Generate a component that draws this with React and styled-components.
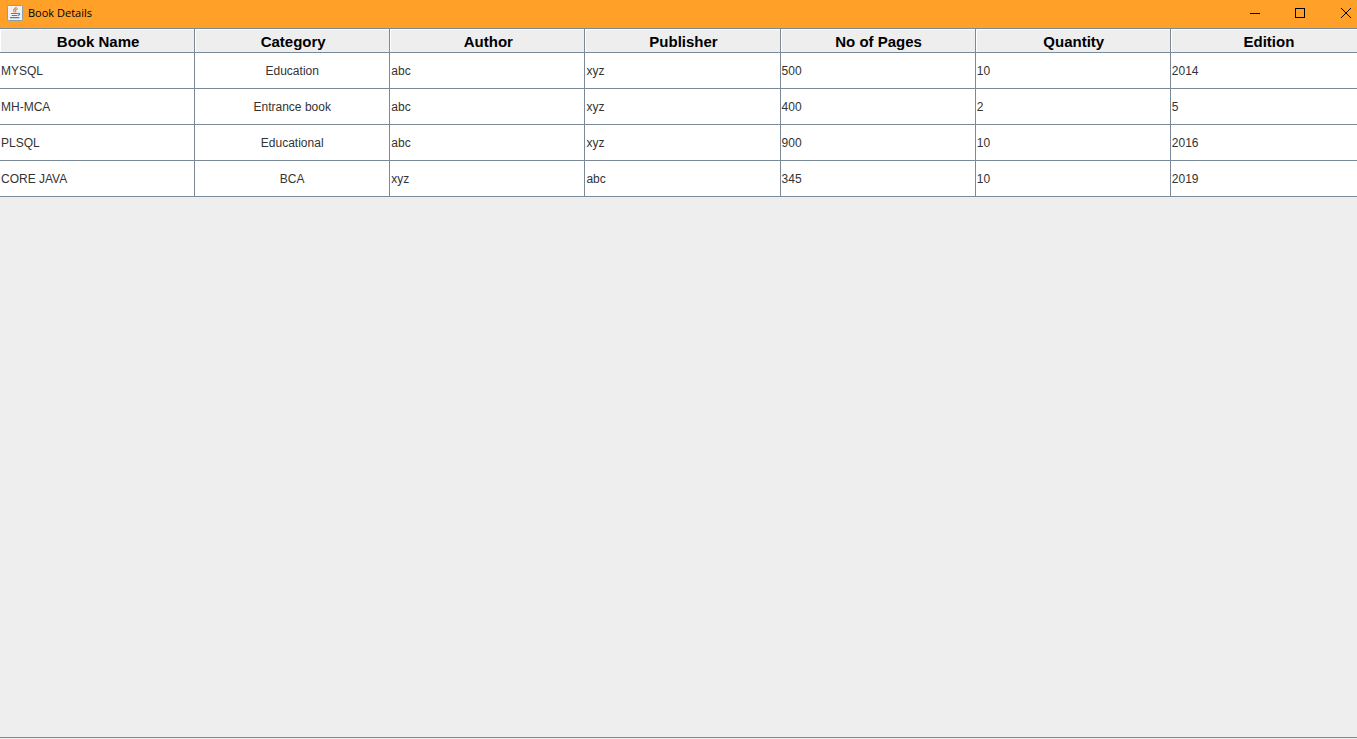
import React from "react";
import styled, { createGlobalStyle } from "styled-components";

const GlobalStyle = createGlobalStyle`
  * { box-sizing: border-box; }
  body { margin: 0; background: #eeeeee; }
`;

const Frame = styled.div`
  display: flex;
  flex-direction: column;
  min-height: 100vh;
  padding-bottom: 1px;
  background: #eeeeee;
  font-family: "Liberation Sans", Arial, sans-serif;
`;

const TitleBar = styled.header`
  display: flex;
  align-items: center;
  height: 28px;
  padding: 0 0 3px 7px;
  background: #ffa029;
  color: #000000;
`;

const Title = styled.h1`
  flex: 1;
  margin: 0 0 0 5px;
  font-family: "Open Sans", "Segoe UI", sans-serif;
  font-size: 11px;
  font-weight: 400;
  line-height: 16px;
`;

const WindowControls = styled.div`
  display: flex;
  flex: none;
  overflow: hidden;
  width: 125px;
`;

const ControlButton = styled.button`
  display: flex;
  flex: none;
  align-items: center;
  justify-content: center;
  width: ${({ $wide }) => ($wide ? 48 : 45)}px;
  height: 24px;
  padding: 0;
  border: 0;
  background: transparent;
  color: inherit;
`;

const ScrollPane = styled.main`
  flex: 1;
  overflow: hidden;
  border-top: 1px solid #7a8a99;
  border-bottom: 1px solid #7a8a99;
`;

const Table = styled.table`
  width: calc(100% + 9px);
  table-layout: fixed;
  border-collapse: separate;
  border-spacing: 0;
`;

const HeaderCell = styled.th`
  height: 24px;
  padding: 2px 0 0 2px;
  border-right: 1px solid #7a8a99;
  border-bottom: 1px solid #7a8a99;
  background: #eeeeee;
  box-shadow: inset 1px 1px 0 #ffffff;
  color: #000000;
  font-size: 15px;
  font-weight: 700;
  line-height: 20px;
  text-align: center;
`;

const Cell = styled.td`
  height: 36px;
  padding: 0 1px;
  border-right: 1px solid #7a8a99;
  border-bottom: 1px solid #7a8a99;
  background: #ffffff;
  color: #333333;
  font-size: 12px;
  line-height: 16px;
  text-align: ${({ $centered }) => ($centered ? "center" : "left")};
`;

const columns = ["Book Name", "Category", "Author", "Publisher", "No of Pages", "Quantity", "Edition"];

const books = [
  ["MYSQL", "Education", "abc", "xyz", "500", "10", "2014"],
  ["MH-MCA", "Entrance book", "abc", "xyz", "400", "2", "5"],
  ["PLSQL", "Educational", "abc", "xyz", "900", "10", "2016"],
  ["CORE JAVA", "BCA", "xyz", "abc", "345", "10", "2019"],
];

function JavaIcon() {
  return (
    <svg width="16" height="16" viewBox="0 0 16 16" fill="none" aria-hidden="true">
      <rect x="0.5" y="0.5" width="15" height="15" rx="1" fill="#eff2f4" stroke="#8b9fb0" />
      <path d="M9.2 1.8C9.2 3.4 6.3 4.2 6.5 5.8c.1.7.8 1 1 1.6M10.6 3.6C9 4.4 8.2 5 8.7 6c.3.5.1 1-.3 1.4" stroke="#ee8140" strokeWidth="1.2" />
      <path d="M4 8.5h7M4.8 10.5h5.4M11 8.3c2.4-.4 2 1.9-.2 2.2M3 12.6h9.4" stroke="#527fa6" strokeWidth="1.1" />
    </svg>
  );
}

function MinimizeIcon() {
  return (
    <svg width="10" height="10" viewBox="0 0 10 10" stroke="currentColor" aria-hidden="true">
      <path d="M0 5.5h10" />
    </svg>
  );
}

function MaximizeIcon() {
  return (
    <svg width="10" height="10" viewBox="0 0 10 10" fill="none" stroke="currentColor" aria-hidden="true">
      <rect x="0.5" y="0.5" width="9" height="9" />
    </svg>
  );
}

function CloseIcon() {
  return (
    <svg width="10" height="10" viewBox="0 0 10 10" stroke="currentColor" aria-hidden="true">
      <path d="M0 0l10 10M10 0L0 10" />
    </svg>
  );
}

export default function App() {
  return (
    <>
      <GlobalStyle />
      <Frame>
        <TitleBar>
          <JavaIcon />
          <Title>Book Details</Title>
          <WindowControls>
            <ControlButton type="button" aria-label="Minimize"><MinimizeIcon /></ControlButton>
            <ControlButton type="button" aria-label="Maximize"><MaximizeIcon /></ControlButton>
            <ControlButton type="button" aria-label="Close" $wide><CloseIcon /></ControlButton>
          </WindowControls>
        </TitleBar>
        <ScrollPane>
          <Table>
            <thead>
              <tr>
                {columns.map((name) => (
                  <HeaderCell key={name} scope="col">{name}</HeaderCell>
                ))}
              </tr>
            </thead>
            <tbody>
              {books.map((book) => (
                <tr key={book[0]}>
                  {book.map((value, i) => (
                    <Cell key={columns[i]} $centered={i === 1}>{value}</Cell>
                  ))}
                </tr>
              ))}
            </tbody>
          </Table>
        </ScrollPane>
      </Frame>
    </>
  );
}
